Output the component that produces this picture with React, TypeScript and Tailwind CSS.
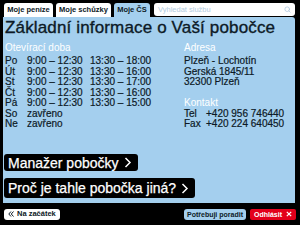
import { Search } from 'lucide-react';

const hours = [
  ['Po', '9:00 – 12:30', '13:30 – 18:00'],
  ['Út', '9:00 – 12:30', '13:30 – 16:00'],
  ['St', '9:00 – 12:30', '13:30 – 17:00'],
  ['Čt', '9:00 – 12:30', '13:30 – 16:00'],
  ['Pá', '9:00 – 12:30', '13:30 – 15:00'],
  ['So', 'zavřeno', ''],
  ['Ne', 'zavřeno', ''],
];

function Chevron() {
  return (
    <svg width="8" height="11" viewBox="0 0 8 11" className="ml-[5px] shrink-0">
      <path d="M1.5 1 L6 5.5 L1.5 10" fill="none" stroke="white" strokeWidth="1.5" />
    </svg>
  );
}

export default function App() {
  return (
    <div className="w-[300px] h-[225px] bg-black flex flex-col font-['Liberation_Sans',Arial,sans-serif] text-[#0d1a26] overflow-hidden">
      {/* Tabs + search */}
      <div className="flex items-start pt-[3px] pl-[4px] h-[17px] shrink-0">
        <div className="w-[49px] h-[14px] bg-white rounded-t-[3px] flex items-center justify-center text-[7.5px] font-bold leading-none">
          Moje peníze
        </div>
        <div className="ml-[3px] w-[55px] h-[14px] bg-white rounded-t-[3px] flex items-center justify-center text-[7.5px] font-bold leading-none">
          Moje schůzky
        </div>
        <div className="ml-[3px] w-[36px] h-[14px] bg-[#a4cfee] rounded-t-[3px] flex items-center justify-center text-[7.5px] font-bold leading-none">
          Moje ČS
        </div>
        <div className="ml-[4px] w-[141px] h-[13px] bg-white rounded-[3px] flex items-center justify-between px-[4px]">
          <span className="text-[7.5px] leading-none text-[#b3cbe0]">Vyhledat službu</span>
          <Search size={7} strokeWidth={2.5} className="text-[#a9c4dc]" />
        </div>
      </div>

      {/* Panel */}
      <div className="mx-[3px] w-[292px] h-[186px] bg-[#a4cfee] rounded-tr-[3px] pl-[2px] pt-[2px] flex flex-col shrink-0">
        <h1 className="text-[17px] leading-[18px] font-normal tracking-[0.15px] [-webkit-text-stroke:0.35px_#0d1a26]">Základní informace o Vaší pobočce</h1>

        <div className="flex mt-[5px] [-webkit-text-stroke:0.2px_#0d1a26]">
          <div className="w-[179px]">
            <div className="text-[10px] leading-[12px] text-white [-webkit-text-stroke:0px]">Otevírací doba</div>
            <div className="mt-[2px] text-[10px] leading-[10.5px]">
              {hours.map(([d, a, b]) => (
                <div key={d} className="flex">
                  <span className="w-[22px]">{d}</span>
                  <span className="w-[63px]">{a}</span>
                  <span>{b}</span>
                </div>
              ))}
            </div>
          </div>
          <div>
            <div className="text-[10px] leading-[12px] text-white [-webkit-text-stroke:0px]">Adresa</div>
            <div className="mt-[2px] text-[10px] leading-[10.5px]">
              <div>Plzeň - Lochotín</div>
              <div>Gerská 1845/11</div>
              <div>32300 Plzeň</div>
            </div>
            <div className="mt-[10.5px] text-[10px] leading-[10.5px] text-white [-webkit-text-stroke:0px]">Kontakt</div>
            <div className="text-[10px] leading-[10.5px]">
              <div className="flex"><span className="w-[22px]">Tel</span><span>+420 956 746440</span></div>
              <div className="flex"><span className="w-[22px]">Fax</span><span>+420 224 640450</span></div>
            </div>
          </div>
        </div>

        <div className="mt-auto mb-[5px] flex flex-col items-start gap-[7px] -ml-[1px] [-webkit-text-stroke:0.25px_white]">
          <button className="h-[17px] bg-black text-white rounded-[3px] pl-[4px] pr-[6px] flex items-center text-[14px] leading-none">
            Manažer pobočky
            <Chevron />
          </button>
          <button className="h-[20px] bg-black text-white rounded-[3px] pl-[4px] pr-[6px] flex items-center text-[14px] leading-none">
            Proč je tahle pobočka jiná?
            <Chevron />
          </button>
        </div>
      </div>

      {/* Footer */}
      <div className="flex-1 flex items-center px-[4px]">
        <button className="h-[11px] bg-white rounded-[3px] px-[4px] flex items-center gap-[3px] text-[7.5px] font-bold leading-none">
          <svg width="6" height="6" viewBox="0 0 6 6">
            <path d="M3 0.5 L0.8 3 L3 5.5 M5.5 0.5 L3.3 3 L5.5 5.5" fill="none" stroke="#0d1a26" strokeWidth="1" />
          </svg>
          Na začátek
        </button>
        <button className="ml-auto h-[11px] bg-[#a4cfee] rounded-[3px] px-[3px] flex items-center text-[7px] font-bold leading-none">
          Potřebuji poradit
        </button>
        <button className="ml-[4px] h-[11px] bg-[#e3001b] text-white rounded-[2px] px-[4px] flex items-center gap-[4px] text-[7px] font-bold leading-none">
          Odhlásit
          <svg width="6" height="6" viewBox="0 0 6 6">
            <path d="M0.8 0.8 L5.2 5.2 M5.2 0.8 L0.8 5.2" fill="none" stroke="white" strokeWidth="1.2" />
          </svg>
        </button>
      </div>
    </div>
  );
}
